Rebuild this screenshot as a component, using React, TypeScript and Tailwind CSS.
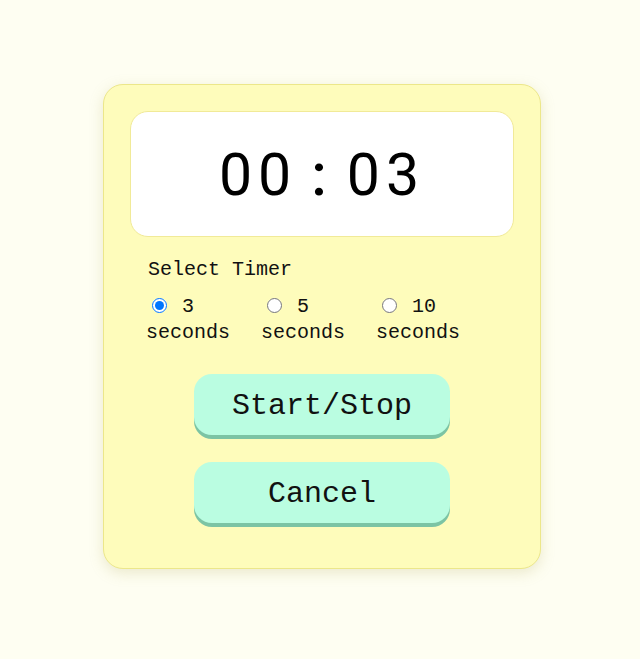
import { useEffect, useRef, useState } from "react";

const options = [3, 5, 10];

function pad(n: number) {
  return String(n).padStart(2, "0");
}

export default function App() {
  const [duration, setDuration] = useState(3);
  const [left, setLeft] = useState(3);
  const [running, setRunning] = useState(false);
  const tick = useRef<number | null>(null);

  useEffect(() => {
    if (!running) return;
    tick.current = window.setInterval(() => {
      setLeft((s) => {
        if (s <= 1) {
          setRunning(false);
          return 0;
        }
        return s - 1;
      });
    }, 1000);
    return () => {
      if (tick.current) window.clearInterval(tick.current);
    };
  }, [running]);

  const pick = (n: number) => {
    setDuration(n);
    setLeft(n);
    setRunning(false);
  };

  return (
    <div
      className="flex min-h-[659px] items-start justify-center bg-[#fefef2] pl-[4px] pt-[84px]"
      style={{ fontFamily: '"Liberation Mono", "DejaVu Sans Mono", monospace' }}
    >
      <div className="w-[438px] rounded-[20px] border border-[#ece78a] bg-[#fefcbb] px-[26px] pt-[26px] pb-[45px] shadow-[0_4px_14px_rgba(180,170,90,0.25)]">
        {/* Display */}
        <div className="flex h-[126px] items-center justify-center rounded-[18px] border border-[#f1ea98] bg-white">
          <span
            className="text-[59px] leading-none tracking-[6px] text-black"
            style={{ fontFamily: "Roboto, Inter, sans-serif" }}
          >
            {pad(Math.floor(left / 60))}
            <span className="mx-[14px] font-medium">:</span>
            {pad(left % 60)}
          </span>
        </div>

        {/* Options */}
        <div className="mt-[20px] px-[18px] text-[20px] leading-[26px] text-[#111]">
          <div>Select Timer</div>
          <div className="mt-[11px] flex gap-[15px] -ml-[2px]">
            {options.map((n) => (
              <label key={n} className="w-[100px] cursor-pointer">
                <input
                  type="radio"
                  name="timer"
                  checked={duration === n}
                  onChange={() => pick(n)}
                  className="ml-[6px] mr-[3px] h-[15px] w-[15px] align-[-1px]"
                />{" "}
                {n} seconds
              </label>
            ))}
          </div>
        </div>

        {/* Buttons */}
        <div className="mt-[28px] flex flex-col items-center gap-[27px]">
          <button
            onClick={() => setRunning((r) => !r)}
            className="h-[61px] w-[256px] rounded-[18px] bg-[#bafde1] pt-[4px] text-[30px] text-[#111] shadow-[0_4px_0_#7cc4a4]"
          >
            Start/Stop
          </button>
          <button
            onClick={() => {
              setRunning(false);
              setLeft(duration);
            }}
            className="h-[61px] w-[256px] rounded-[18px] bg-[#bafde1] pt-[4px] text-[30px] text-[#111] shadow-[0_4px_0_#7cc4a4]"
          >
            Cancel
          </button>
        </div>
      </div>
    </div>
  );
}
